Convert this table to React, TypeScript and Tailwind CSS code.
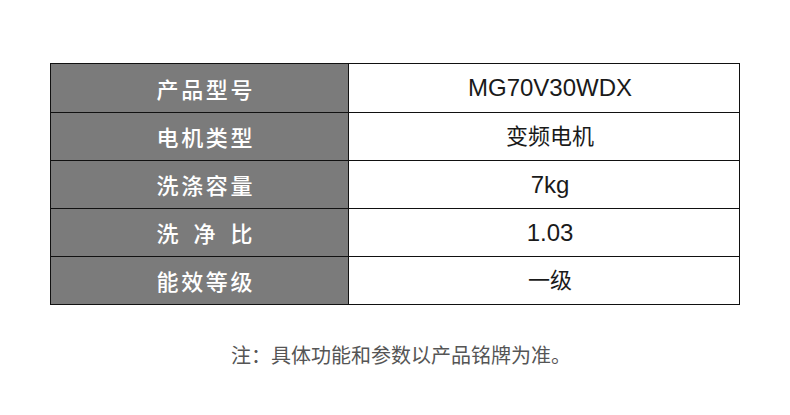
import React from "react";

const rows: { label: string; value: string; latin?: boolean }[] = [
  { label: "产品型号", value: "MG70V30WDX", latin: true },
  { label: "电机类型", value: "变频电机" },
  { label: "洗涤容量", value: "7kg", latin: true },
  { label: "洗净比", value: "1.03", latin: true },
  { label: "能效等级", value: "一级" },
];

export default function App() {
  return (
    <div className="w-[790px] h-[415px] bg-white flex flex-col items-center pt-[63px]" style={{ fontFamily: '"Liberation Sans", "Noto Sans CJK SC", sans-serif' }}>
      <div className="w-[690px] border border-[#111] flex flex-col">
        {rows.map((r, i) => (
          <div key={i} className={`flex h-[48px] ${i > 0 ? "border-t border-[#111]" : ""}`}>
            <div className="w-[298px] bg-[#7b7b7b] border-r border-[#111] flex items-center justify-center pl-[10px]">
              <div className="w-[96px] flex justify-between text-white text-[22px] font-medium" style={{ fontFamily: '"Noto Sans CJK SC", sans-serif' }}>
                {Array.from(r.label).map((c, j) => (
                  <span key={j}>{c}</span>
                ))}
              </div>
            </div>
            <div className={`flex-1 flex items-center justify-center text-[#1a1a1a] pl-[12px] ${r.latin ? "text-[24px]" : "text-[22px]"}`}>
              {r.value}
            </div>
          </div>
        ))}
      </div>
      <div className="mt-[40px] pl-[12px] text-[20px] text-[#555] leading-none" style={{ fontFamily: '"Noto Sans CJK SC", sans-serif' }}>
        注：具体功能和参数以产品铭牌为准。
      </div>
    </div>
  );
}
